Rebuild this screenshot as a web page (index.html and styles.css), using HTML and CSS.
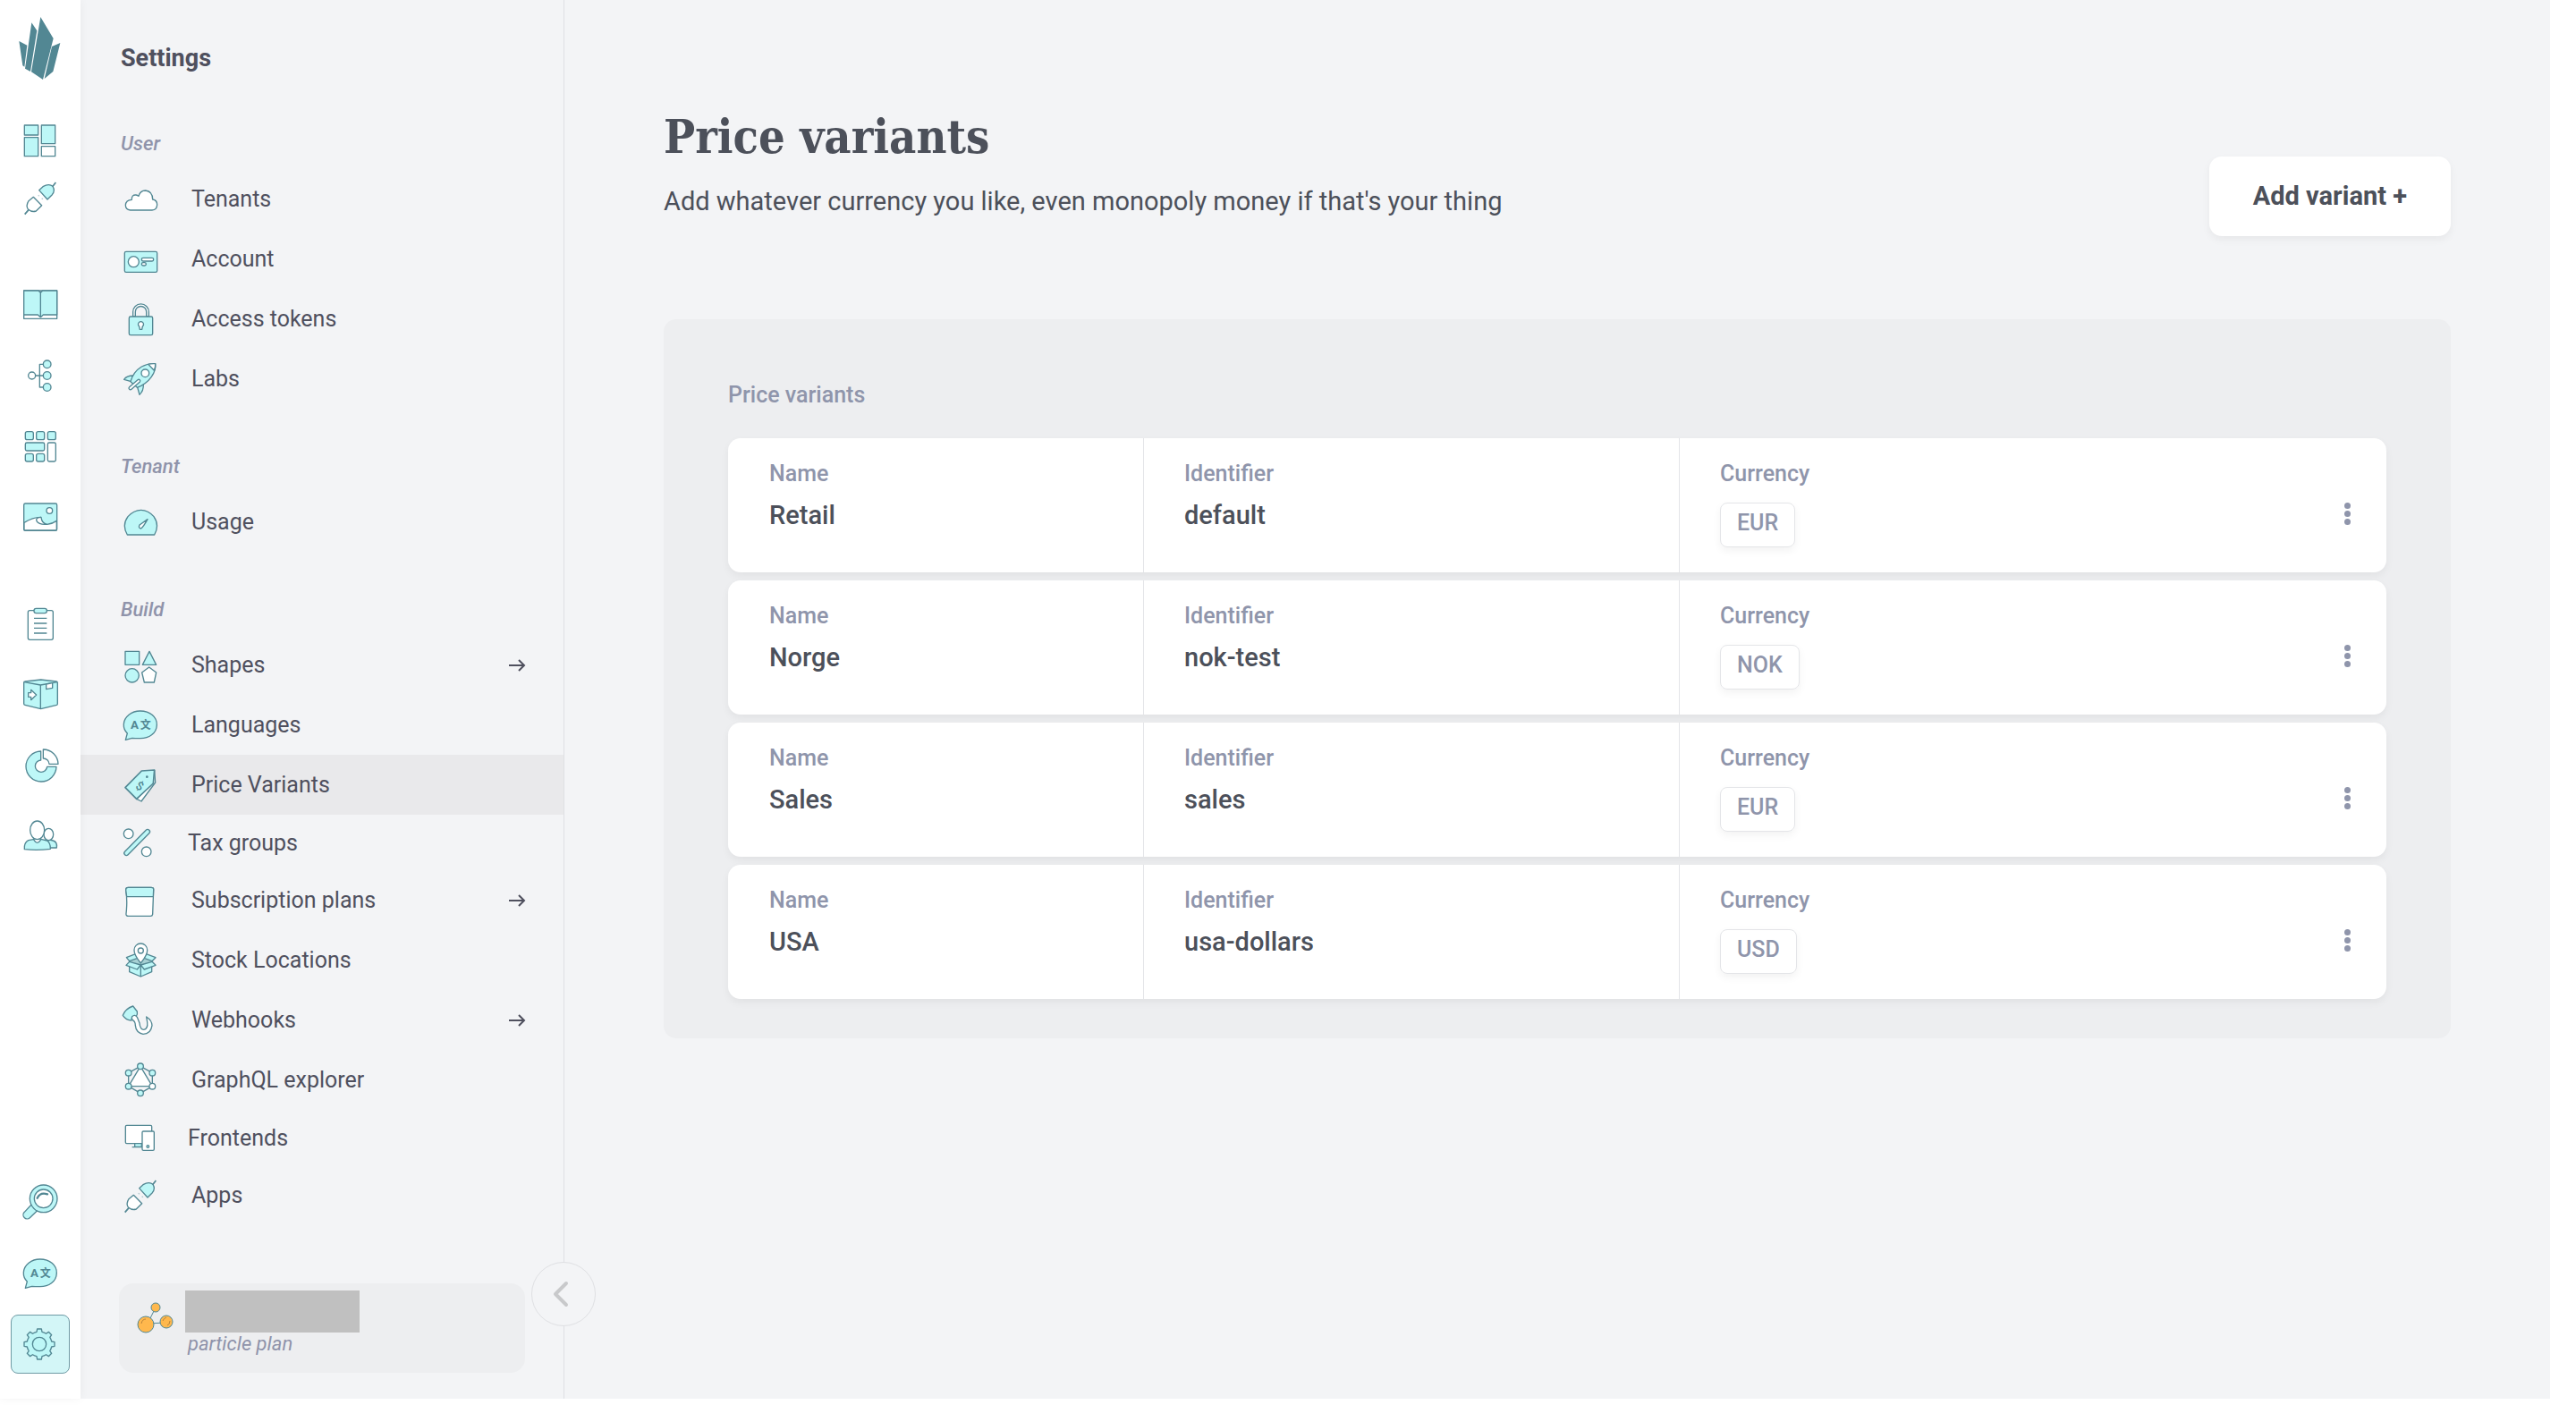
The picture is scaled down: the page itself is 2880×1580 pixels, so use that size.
FILE: index.html
```html
<!DOCTYPE html>
<html lang="en">
<head>
<meta charset="utf-8">
<title>Price variants</title>
<meta name="viewport" content="width=device-width, initial-scale=1">
<link rel="stylesheet" href="styles.css">
</head>
<body>
<div class="app">
  <nav class="rail" aria-label="Main">
    <a class="logo" href="#" aria-label="Home"><svg width="48" height="72" viewBox="63 54 144 216"><path fill="#528793" d="M64 138L91 152L82 224L76 220ZM106 76L124 103L102 240L84 230ZM136 57L179 129L144 267L105 241ZM202 144L178 240L149 264L174 156Z"/></svg></a>
    <div class="rail-group rail-top">
      <a href="#" aria-label="Dashboard"><svg viewBox="69 405 132 132"><path class="c" d="M82 420h46v33h-46zM82 461h46v63h-46zM139 420h46v62h-46z"/><path class="w" d="M139 491h46v33h-46z"/></svg></a>
      <a href="#" aria-label="Apps"><svg viewBox="70 597 132 132"><path class="c" d="M132 638L145 626Q165 614 178 625Q187 640 176 653L160 669Z"/><path class="w" d="M113 661L97 674Q87 690 95 702Q108 713 122 708L141 689Z"/><path class="n thick" d="M177 626L188 612M97 704L84 719"/><path class="n faint" d="M129 655l4 3M141 665l4 3"/></svg></a>
    </div>
    <div class="rail-group">
      <a href="#" aria-label="Catalogue"><svg viewBox="69 955 132 132"><path class="w" d="M80 973h111v94h-111z"/><path class="c" d="M80 973H129L136 980L143 973H191V1054H145L136 1062L127 1054H80ZM136 980V1062"/></svg></a>
      <a href="#" aria-label="Topics"><svg viewBox="69 1192 132 132"><path class="n" d="M145 1220H133V1297H145M119 1258H145"/><circle class="w" cx="107" cy="1258" r="12"/><circle class="c" cx="158" cy="1220" r="13"/><circle class="c" cx="158" cy="1258" r="13"/><circle class="c" cx="158" cy="1297" r="13"/></svg></a>
      <a href="#" aria-label="Grids"><svg viewBox="69 -10 132 132"><g class="c"><rect x="85" y="7" width="27" height="27" rx="6"/><rect x="122" y="7" width="27" height="27" rx="6"/><rect x="160" y="7" width="27" height="27" rx="6"/><rect x="85" y="44" width="64" height="27" rx="5"/><rect x="85" y="81" width="27" height="26" rx="6"/><rect x="122" y="81" width="27" height="26" rx="6"/></g><rect class="w" x="160" y="44" width="27" height="63" rx="5"/></svg></a>
      <a href="#" aria-label="Assets"><svg viewBox="69 226 132 132"><rect class="c" x="80" y="247" width="111" height="91" rx="5"/><path class="w" d="M81 311Q112 292 138 293Q140 314 158 317Q176 315 190 305V334Q190 337 187 337H84Q81 337 81 334Z"/><path class="n" d="M138 293Q118 294 123 306Q130 319 158 317"/><circle class="w" cx="166" cy="271" r="10"/></svg></a>
    </div>
    <div class="rail-group">
      <a href="#" aria-label="Orders"><svg viewBox="69 586 132 132"><rect class="w" x="94" y="606" width="84" height="98" rx="6"/><rect class="c" x="114" y="599" width="43" height="16" rx="7"/><path class="n" d="M114 632H157M114 649H157M114 665H157M114 682H157"/></svg></a>
      <a href="#" aria-label="Fulfilment"><svg viewBox="69 823 132 132"><path class="c" d="M84 844L137 838L189 844Q193 845 193 849V919Q193 922 190 923L137 936L84 923Q80 922 80 919V848Q80 844 84 844Z"/><path class="n" d="M81 846L136 856L192 846M136 856V936"/><path class="w" d="M155 853L176 849V866L155 870Z"/><path class="w" d="M95 882H104V872L122 889L104 906V896H95Z"/></svg></a>
      <a href="#" aria-label="Statistics"><svg viewBox="69 1060 132 132"><path class="c" d="M137 1078A51 51 0 1 0 189 1130H158A20 20 0 1 1 137 1108Z"/><path class="w" d="M145 1072A50 50 0 0 1 195 1121H165A20 20 0 0 0 145 1102Z"/></svg></a>
      <a href="#" aria-label="Customers"><svg viewBox="69 1297 132 132"><path class="c" d="M166 1402H190Q193 1382 178 1378L160 1374Z"/><ellipse class="w" cx="163" cy="1357" rx="16" ry="20"/><path class="c" d="M82 1407Q80 1385 95 1377L112 1374H140L158 1378Q170 1386 169 1406Q125 1412 82 1407Z"/><path class="w" d="M114 1368V1376Q125 1394 136 1376V1368Z"/><ellipse class="w" cx="125" cy="1343" rx="24" ry="31"/></svg></a>
    </div>
    <div class="rail-group rail-bottom">
      <a href="#" aria-label="Search"><svg viewBox="69 1089 132 132"><path class="c" d="M108 1158L82 1186A13 13 0 0 0 100 1205L128 1178Z"/><circle class="c" cx="146" cy="1141" r="46"/><path fill="#bdf7f7" d="M108 1163l8-8l15 15l-9 8z"/><circle class="w" cx="146" cy="1141" r="31"/><path class="n bold" d="M125 1139Q135 1118 159 1126"/></svg></a>
      <a href="#" aria-label="Language"><svg viewBox="403 925 132 132"><path class="c" d="M468 943C502 943 525 964 524 990C523 1018 498 1036 466 1035Q450 1035 441 1034L419 1040L425 1018Q412 1005 413 988C414 962 440 943 468 943Z"/><text class="glyph" x="436" y="1004" font-size="40">A</text><text class="glyph" x="468" y="1003" font-size="36">文</text></svg></a>
      <a class="current" href="#" aria-label="Settings" aria-current="page"><svg viewBox="-63 -66 132 132"><path class="c" d="M41 -9L51 -7V7L41 9A42 42 0 0 1 35.400 22.600L41 31L31 41L22.600 35.400A42 42 0 0 1 9 41L7 51H-7L-9 41A42 42 0 0 1 -22.600 35.400L-31 41L-41 31L-35.400 22.600A42 42 0 0 1 -41 9L-51 7V-7L-41 -9A42 42 0 0 1 -35.400 -22.600L-41 -31L-31 -41L-22.600 -35.400A42 42 0 0 1 -9 -41L-7 -51H7L9 -41A42 42 0 0 1 22.600 -35.400L31 -41L41 -31L35.400 -22.600A42 42 0 0 1 41 -9Z"/><circle class="n" r="23"/></svg></a>
    </div>
  </nav>

  <aside class="side">
    <h2 class="side-title">Settings</h2>
    <section class="group">
      <h3 class="group-title">User</h3>
      <ul class="menu">
        <li><a href="#"><svg viewBox="405 601 132 132"><path class="w" d="M437 703Q421 701 421 686Q422 669 442 668Q441 651 456 652Q462 653 465 656Q470 637 488 637Q512 640 512 667Q527 669 527 685Q526 702 510 703Z"/></svg>Tenants</a></li>
        <li><a href="#"><svg viewBox="405 802 132 132"><rect class="c" x="418" y="842" width="109" height="69" rx="5"/><circle class="w" cx="448" cy="876" r="18"/><rect class="w" x="475" y="863" width="40" height="11" rx="5"/><rect class="w" x="475" y="879" width="15" height="10" rx="5"/></svg>Account</a></li>
        <li><a href="#"><svg viewBox="405 1003 132 132"><path class="w" d="M446 1060V1044A26 26 0 0 1 499 1044V1060H491V1044A18 18 0 0 0 454 1044V1060Z"/><rect class="c" x="433" y="1060" width="79" height="62" rx="5"/><path class="w" d="M467 1093A9 9 0 1 1 478 1093L476 1103H469Z"/></svg>Access tokens</a></li>
        <li><a href="#"><svg viewBox="405 1204 132 132"><path class="c" d="M446 1258Q425 1258 416 1271L440 1278ZM461 1297L468 1322Q482 1310 481 1286Z"/><path class="c" d="M521 1218Q524 1240 508 1262Q490 1287 460 1298L438 1278Q447 1245 475 1228Q497 1216 521 1218Z"/><path class="w" d="M497 1220L517 1241Q522 1230 521 1218Q508 1217 497 1220Z"/><circle class="w" cx="487" cy="1250" r="13"/><path class="w" d="M462 1272L434 1296A5 5 0 0 0 441 1304L469 1279A5 5 0 0 0 462 1272Z"/></svg>Labs</a></li>
      </ul>
    </section>
    <section class="group">
      <h3 class="group-title">Tenant</h3>
      <ul class="menu">
        <li><a href="#"><svg viewBox="405 244 132 132"><path class="c" d="M427 352Q408 320 429 291Q449 269 473 269Q497 269 516 291Q536 320 518 352Z"/><path class="w" d="M495 300L468 319Q463 329 473 331Q480 327 495 300Z"/></svg>Usage</a></li>
      </ul>
    </section>
    <section class="group">
      <h3 class="group-title">Build</h3>
      <ul class="menu">
        <li><a href="#"><svg viewBox="405 724 132 132"><path class="c" d="M420 743h47v45h-47zM501 743L524 788H478Z"/><circle class="c" cx="443" cy="824" r="23"/><path class="w" d="M500 796L524 814L517 847H484L476 814Z"/></svg>Shapes<svg class="arrow" viewBox="0 0 20 14"><path d="M1 7H18M12 1L18 7L12 13"/></svg></a></li>
        <li><a href="#"><svg viewBox="403 925 132 132" aria-hidden="true"><path class="c" d="M468 943C502 943 525 964 524 990C523 1018 498 1036 466 1035Q450 1035 441 1034L419 1040L425 1018Q412 1005 413 988C414 962 440 943 468 943Z"/><text class="glyph" x="436" y="1004" font-size="40">A</text><text class="glyph" x="468" y="1003" font-size="36">文</text></svg>Languages</a></li>
        <li><a class="active" href="#" aria-current="page"><svg viewBox="405 1126 132 132" aria-hidden="true"><path class="w" d="M518 1142L521 1183L474 1246L458 1238L510 1184Z"/><path class="c thick" d="M420 1200L475 1144L518 1141L514 1186L458 1238Z"/><circle cx="493" cy="1164" r="4" fill="#528793"/><text class="glyph light" font-size="40" transform="translate(452 1201) rotate(30)">$</text></svg>Price Variants</a></li>
        <li><a class="compact" href="#"><svg viewBox="405 1320 120 132"><circle class="w" cx="431" cy="1357" r="16"/><circle class="w" cx="491" cy="1417" r="16"/><path d="M424 1422L495 1350" stroke="#528793" stroke-width="19" stroke-linecap="round"/><path d="M424 1422L495 1350" stroke="#bdf7f7" stroke-width="11" stroke-linecap="round"/></svg>Tax groups</a></li>
        <li><a href="#"><svg viewBox="405 73 132 132"><path class="w" d="M430 95H507Q516 95 515 103L512 185Q511 191 505 191H431Q422 191 423 183Q428 140 422 103Q422 95 430 95Z"/><path class="c" d="M430 95H507Q516 95 515 103L514 126H425L422 103Q422 95 430 95Z"/></svg>Subscription plans<svg class="arrow" viewBox="0 0 20 14"><path d="M1 7H18M12 1L18 7L12 13"/></svg></a></li>
        <li><a href="#"><svg viewBox="405 274 132 132"><path d="M434 343L472 330L510 343L472 355Z" fill="#a6d0d3"/><path class="c" d="M434 342L424 330L455 318L462 332ZM510 342L522 330L490 318L483 332Z"/><path class="c" d="M434 350V378L472 394L509 378V350L472 355ZM472 355V394"/><path class="c" d="M434 344L472 355L460 370L423 356ZM510 344L472 355L484 370L522 356Z"/><path class="w" d="M472 349Q449 320 450 305A22 22 0 0 1 494 305Q495 320 472 349Z"/><circle class="w" cx="472" cy="307" r="9"/></svg>Stock Locations</a></li>
        <li><a href="#"><svg viewBox="405 475 132 132"><path class="c" d="M446 493L460 511Q462 520 457 527L443 530L441 541Q423 541 412 524Q420 502 446 493Z"/><path class="w" d="M443 528Q452 519 460 530L468 550Q470 572 482 572Q497 570 494 547L491 529Q509 540 510 558Q506 587 480 587Q456 582 454 558Q454 545 445 540Q440 534 443 528Z"/></svg>Webhooks<svg class="arrow" viewBox="0 0 20 14"><path d="M1 7H18M12 1L18 7L12 13"/></svg></a></li>
        <li><a href="#"><svg viewBox="405 676 132 132"><path class="w" d="M471 695L511 762H431Z"/><path class="n" d="M471 695L511 717V762L471 785L431 762V717Z"/><g class="c"><circle cx="471" cy="695" r="10"/><circle cx="511" cy="717" r="10"/><circle cx="471" cy="785" r="10"/><circle cx="431" cy="762" r="10"/><circle cx="431" cy="717" r="10"/></g><circle class="w" cx="511" cy="762" r="10"/></svg>GraphQL explorer</a></li>
        <li><a class="compact" href="#"><svg viewBox="405 870 120 132"><rect class="w" x="421" y="895" width="88" height="61" rx="4"/><path class="c" d="M452 956H475V967H452ZM443 968H480"/><rect class="w" x="477" y="915" width="40" height="64" rx="4"/><circle class="c" cx="496" cy="966" r="4"/></svg>Frontends</a></li>
        <li><a href="#"><svg viewBox="70 597 132 132"><path class="c" d="M132 638L145 626Q165 614 178 625Q187 640 176 653L160 669Z"/><path class="w" d="M113 661L97 674Q87 690 95 702Q108 713 122 708L141 689Z"/><path class="n thick" d="M177 626L188 612M97 704L84 719"/><path class="n faint" d="M129 655l4 3M141 665l4 3"/></svg>Apps</a></li>
      </ul>
    </section>
    <div class="plan">
      <svg class="plan-icon" viewBox="152 1454 44 40"><g stroke="#528793" fill="#ffb84d"><path fill="none" d="M174 1462L165 1480L186 1479"/><circle cx="163" cy="1481" r="9"/><circle cx="186" cy="1478" r="7"/><circle cx="174" cy="1462" r="5"/></g><path d="M158 1480q1-5 5-5M182 1477q1-3 4-4M190 1477q0 4-3 5" stroke="#b9853b" fill="none"/></svg>
      <div class="plan-text">
        <div class="plan-name"></div>
        <p class="plan-tier">particle plan</p>
      </div>
    </div>
    <button class="collapse" type="button" aria-label="Collapse menu"><svg viewBox="0 0 18 30"><path d="M15 3L3 15L15 27"/></svg></button>
  </aside>

  <main class="main">
    <header class="head">
      <div class="head-text">
        <h1>Price variants</h1>
        <p>Add whatever currency you like, even monopoly money if that's your thing</p>
      </div>
      <button class="add" type="button">Add variant +</button>
    </header>
    <section class="panel">
      <h2 class="panel-title">Price variants</h2>
      <ul class="variants">
        <li class="variant">
          <dl><div><dt>Name</dt><dd>Retail</dd></div><div><dt>Identifier</dt><dd>default</dd></div><div><dt>Currency</dt><dd class="tag">EUR</dd></div></dl>
          <button class="more" type="button" aria-label="Actions for Retail"><i></i><i></i><i></i></button>
        </li>
        <li class="variant">
          <dl><div><dt>Name</dt><dd>Norge</dd></div><div><dt>Identifier</dt><dd>nok-test</dd></div><div><dt>Currency</dt><dd class="tag">NOK</dd></div></dl>
          <button class="more" type="button" aria-label="Actions for Norge"><i></i><i></i><i></i></button>
        </li>
        <li class="variant">
          <dl><div><dt>Name</dt><dd>Sales</dd></div><div><dt>Identifier</dt><dd>sales</dd></div><div><dt>Currency</dt><dd class="tag">EUR</dd></div></dl>
          <button class="more" type="button" aria-label="Actions for Sales"><i></i><i></i><i></i></button>
        </li>
        <li class="variant">
          <dl><div><dt>Name</dt><dd>USA</dd></div><div><dt>Identifier</dt><dd>usa-dollars</dd></div><div><dt>Currency</dt><dd class="tag">USD</dd></div></dl>
          <button class="more" type="button" aria-label="Actions for USA"><i></i><i></i><i></i></button>
        </li>
      </ul>
    </section>
  </main>
</div>
</body>
</html>
```
FILE: styles.css
```css
* { box-sizing: border-box; }

body {
  margin: 0;
  padding: 0 29px 16px 0;
  background: #fff;
  color: #4c505a;
  font-family: Roboto, "Liberation Sans", sans-serif;
  font-size: 25px;
}

h1, h2, h3, p, ul, dl, dd { margin: 0; padding: 0; }
ul { list-style: none; }
a { color: inherit; text-decoration: none; }
button { font: inherit; color: inherit; border: 0; padding: 0; cursor: pointer; }

.app {
  display: flex;
  min-height: calc(100vh - 16px);
  background: #f3f4f6;
}

/* Icon palette */
.c, .w, .n { stroke: #528793; stroke-width: 4; stroke-linejoin: round; }
.c { fill: #bdf7f7; }
.w { fill: #fff; }
.n { fill: none; }
.thick { stroke-width: 5; }
.bold { stroke-width: 7; stroke-linecap: round; }
.faint { opacity: .4; }
.glyph { fill: #528793; font-family: Roboto, "Noto Sans CJK SC", sans-serif; font-weight: 700; }
.light { font-weight: 500; }

/* Icon rail */
.rail {
  display: flex;
  flex-direction: column;
  flex: none;
  width: 90px;
  padding: 18px 0 22px;
  background: #fff;
  box-shadow: 0 0 10px rgba(0, 0, 0, .05);
  z-index: 1;
}
.logo { display: block; margin: 0 auto; height: 72px; }
.rail-group { display: flex; flex-direction: column; align-items: center; margin-top: 41px; }
.rail-group a { display: flex; align-items: center; justify-content: center; width: 66px; height: 79px; }
.rail-group svg { width: 44px; height: 44px; }
.rail-top { margin: 35px 0 7px; }
.rail-top a { height: 64px; }
.rail-bottom { margin-top: auto; }
.rail-bottom .current {
  height: 66px;
  margin: 7px 0 6px;
  background: #d3f6f7;
  border: 1px solid #6f9ba5;
  border-radius: 8px;
}

/* Settings menu */
.side {
  position: relative;
  display: flex;
  flex-direction: column;
  flex: none;
  width: 541px;
  padding: 45px 0 29px;
  border-right: 1px solid #dfe0e3;
  color: #4f505e;
}
.side-title { margin: 0 45px 61px; font-size: 27px; line-height: 40px; font-weight: 700; }
.group { margin-bottom: 50px; }
.group-title {
  margin: 0 45px 13px;
  font-size: 22px;
  line-height: 30px;
  font-style: italic;
  font-weight: 500;
  color: #8f93aa;
}
.menu a { display: flex; align-items: center; gap: 35px; height: 67px; padding: 0 42px 0 45px; }
.menu svg { flex: none; width: 44px; height: 44px; }
.menu .compact { height: 62px; }
.menu .compact svg { width: 40px; }
.menu .active { background: #e9e9eb; }
.menu .arrow { width: 20px; height: 14px; margin-left: auto; fill: none; stroke: #4f505e; stroke-width: 2; }

.plan {
  display: flex;
  gap: 11px;
  height: 100px;
  margin: auto 43px 0;
  padding: 8px 19px;
  background: #edeef0;
  border-radius: 16px;
}
.plan-icon { width: 44px; height: 40px; margin-top: 11px; }
.plan-name { width: 195px; height: 47px; background: #c0c0c0; }
.plan-tier { padding-left: 3px; font-size: 22px; line-height: 26px; font-style: italic; color: #8f93aa; }

.collapse {
  position: absolute;
  right: -36px;
  bottom: 81px;
  display: flex;
  align-items: center;
  justify-content: center;
  width: 72px;
  height: 72px;
  padding-right: 7px;
  background: #f3f4f6;
  border: 1px solid #dfe0e3;
  border-radius: 50%;
}
.collapse svg { width: 18px; height: 30px; fill: none; stroke: #c8c9cb; stroke-width: 4; stroke-linecap: round; stroke-linejoin: round; }

/* Content */
.main { flex: 1; min-width: 0; padding: 121px 111px 0; }
.head { display: flex; align-items: flex-end; justify-content: space-between; margin-bottom: 93px; }
.head-text { padding-bottom: 19px; }
h1 { margin-bottom: 20px; font-family: "Roboto Slab", "DejaVu Serif Condensed", "DejaVu Serif", serif; font-size: 52px; line-height: 64px; font-weight: 700; }
.head p { font-size: 29px; line-height: 40px; }
.add {
  padding: 0 49px;
  background: #fff;
  border-radius: 14px;
  box-shadow: 0 4px 10px rgba(0, 0, 0, .05);
  font-size: 29px;
  line-height: 89px;
  font-weight: 700;
}

.panel { padding: 65px 72px 44px; background: #edeef0; border-radius: 14px; }
.panel-title { margin-bottom: 28px; font-size: 25px; line-height: 40px; font-weight: 500; color: #8f95ab; }
.variants { display: grid; gap: 9px; }
.variant {
  display: flex;
  min-height: 150px;
  background: #fff;
  border-radius: 14px;
  box-shadow: 0 4px 10px rgba(0, 0, 0, .05);
}
.variant dl { display: grid; grid-template-columns: 464fr 599fr 731fr; flex: 1; }
.variant dl > div { padding: 25px 46px 0; }
.variant dl > div + div { border-left: 1px solid #e4e5e8; padding-left: 45px; }
.variant dt { margin-bottom: 13px; font-size: 25px; line-height: 30px; font-weight: 500; color: #8f95ab; }
.variant dd { font-size: 29px; line-height: 36px; font-weight: 500; }
.variant .tag {
  width: fit-content;
  margin-top: 17px;
  padding: 6px 18px 10px;
  border: 1px solid #e4e5e8;
  border-radius: 8px;
  box-shadow: 0 4px 10px rgba(0, 0, 0, .05);
  font-size: 25px;
  line-height: 32px;
  color: #8f95ab;
}
.more {
  display: flex;
  flex-direction: column;
  align-items: center;
  justify-content: center;
  gap: 2px;
  width: 32px;
  height: 32px;
  margin: 68px 28px 0 0;
  background: none;
}
.more i { width: 7px; height: 7px; border-radius: 50%; background: #8f95ab; }
```
